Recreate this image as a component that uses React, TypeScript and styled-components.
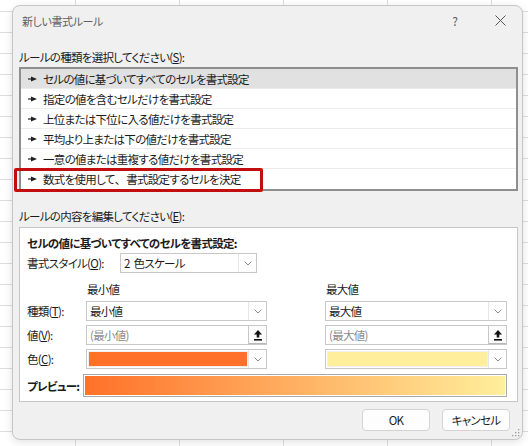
import React from "react";
import styled, { createGlobalStyle } from "styled-components";

const GlobalStyle = createGlobalStyle`
  html, body { margin: 0; padding: 0; }
  body {
    width: 528px;
    height: 446px;
    overflow: hidden;
    background-color: #fff;
    background-image:
      linear-gradient(to right, #dedede 1px, transparent 1px),
      linear-gradient(to bottom, #dedede 1px, transparent 1px);
    background-size: 104px 21px;
    background-position: 75px 11px;
    font-family: "Noto Sans CJK JP", "Noto Sans", sans-serif;
    font-feature-settings: "palt";
    letter-spacing: -0.7px;
    color: #1b1b1b;
  }
`;

const Page = styled.div`
  padding: 5px 0 0 12px;
`;

const Dialog = styled.div`
  position: relative;
  box-sizing: border-box;
  width: 511px;
  height: 435px;
  background: #f0f0f0;
  border: 1px solid #c6c6c6;
  border-radius: 8px;
  box-shadow: 0 2px 8px rgba(0, 0, 0, 0.12);
  padding: 0 4px 0 6px;
  display: flex;
  flex-direction: column;
`;

const TitleBar = styled.div`
  display: flex;
  align-items: center;
  height: 29px;
`;

const Title = styled.div`
  flex: 1;
  padding-left: 3px;
  font-size: 11px;
  letter-spacing: -0.4px;
  color: #606060;
`;

const TitleButton = styled.div<{ $mr?: number }>`
  width: 30px;
  height: 29px;
  display: flex;
  align-items: center;
  justify-content: center;
  margin-right: ${(p) => p.$mr ?? 0}px;
  color: #5c5c5c;
  font-size: 12px;
  letter-spacing: 0;
`;

const SectionLabel = styled.div<{ $mt: number }>`
  margin-top: ${(p) => p.$mt}px;
  font-size: 11.5px;
  line-height: 16px;
`;

const U = styled.span`
  text-decoration: underline;
  text-underline-offset: 1px;
`;

const FullWidth = styled.span`
  font-feature-settings: normal;
  letter-spacing: 0;
`;

const List = styled.div`
  position: relative;
  margin-top: 2px;
  background: #fff;
  border: 2px solid #8e8e8e;
`;

const Row = styled.div<{ $selected?: boolean; $last?: boolean }>`
  box-sizing: border-box;
  height: 20px;
  display: flex;
  align-items: center;
  padding-left: 7px;
  font-size: 11.5px;
  white-space: pre;
  background: ${(p) => (p.$selected ? "#e1e1e1" : "#fff")};
  border-bottom: ${(p) => (p.$last ? "none" : "1px solid #ececec")};
`;

const RowArrow = styled.svg`
  width: 9px;
  height: 6px;
  margin-right: 6px;
  flex: none;
`;

const Highlight = styled.div`
  position: absolute;
  left: -7px;
  top: 99px;
  width: 249px;
  height: 24px;
  box-sizing: border-box;
  border: 3px solid #c20e0e;
  border-radius: 2px;
`;

const Panel = styled.div`
  box-sizing: border-box;
  margin-top: 3px;
  height: 175px;
  background: #fff;
  border: 1px solid #c6c6c6;
  padding: 7px 10px 0 7px;
  display: flex;
  flex-direction: column;
`;

const Heading = styled.div`
  font-size: 11.5px;
  line-height: 16px;
  font-weight: bold;
`;

const StyleRow = styled.div`
  margin-top: 2px;
  display: flex;
  align-items: center;
  height: 20px;
  font-size: 11.5px;
`;

const FieldLabel = styled.div<{ $w: number; $bold?: boolean }>`
  width: ${(p) => p.$w}px;
  flex: none;
  white-space: nowrap;
  font-size: 11.5px;
  font-weight: ${(p) => (p.$bold ? "bold" : "normal")};
`;

const Grid = styled.div`
  margin-top: 8px;
  display: grid;
  grid-template-columns: 59px 181px 58px 182px;
  grid-template-rows: 16px 20px 20px 20px;
  row-gap: 4px;
  align-items: center;
  font-size: 11.5px;
`;

const ColHead = styled.div<{ $col: number }>`
  grid-column: ${(p) => p.$col};
  padding-left: 1px;
  line-height: 16px;
`;

const Box = styled.div<{ $col: number; $w?: number }>`
  grid-column: ${(p) => p.$col};
  box-sizing: border-box;
  height: 20px;
  width: ${(p) => (p.$w ? `${p.$w}px` : "auto")};
  display: flex;
  align-items: stretch;
  background: #fff;
  border: 1px solid #c8c8c8;
`;

const BoxText = styled.div<{ $muted?: boolean }>`
  flex: 1;
  display: flex;
  align-items: center;
  padding-left: 3px;
  font-size: 11.5px;
  white-space: pre;
  word-spacing: 2px;
  color: ${(p) => (p.$muted ? "#8a8a8a" : "#1b1b1b")};
`;

const ChevronCell = styled.div`
  width: 17px;
  flex: none;
  display: flex;
  align-items: center;
  justify-content: center;
  border-left: 1px solid #e6e6e6;
`;

const PickButton = styled.div`
  width: 17px;
  flex: none;
  display: flex;
  align-items: center;
  justify-content: center;
  background: #fbfbfb;
  border-left: 1px solid #c8c8c8;
  box-shadow: inset 0 -1px 0 #b8b8b8;
`;

const Swatch = styled.div<{ $color: string }>`
  flex: 1;
  margin: 2px 1px 2px 2px;
  background: ${(p) => p.$color};
  outline: 1px solid rgba(0, 0, 0, 0.06);
`;

const PreviewRow = styled.div`
  margin-top: 5px;
  display: flex;
  align-items: center;
  height: 23px;
`;

const PreviewBar = styled.div`
  flex: 1;
  box-sizing: border-box;
  height: 23px;
  border: 1px solid #a9a9a9;
  padding: 1px;
  background: #fff;
`;

const Gradient = styled.div`
  height: 100%;
  background: linear-gradient(to right, #ff7128, #ffef9c);
`;

const Buttons = styled.div`
  margin-top: 7px;
  display: flex;
  justify-content: flex-end;
  gap: 12px;
  padding-right: 8px;
`;

const Button = styled.div`
  box-sizing: border-box;
  width: 68px;
  height: 22px;
  display: flex;
  align-items: center;
  justify-content: center;
  background: #fdfdfd;
  border: 1px solid #d4d4d4;
  border-radius: 4px;
  font-size: 11.5px;
`;

const Grip = styled.svg`
  position: absolute;
  right: 2px;
  bottom: 2px;
  width: 9px;
  height: 9px;
`;

const Arrow = () => (
  <RowArrow viewBox="0 0 9 6">
    <line x1="0" y1="3" x2="4" y2="3" stroke="#222" strokeWidth="1.2" />
    <polygon points="3,0.6 9,3 3,5.4" fill="#222" />
  </RowArrow>
);

const Chevron = () => (
  <svg width="8" height="5" viewBox="0 0 8 5">
    <polyline points="0.5,0.5 4,4 7.5,0.5" fill="none" stroke="#8a8a8a" strokeWidth="1" />
  </svg>
);

const UpIcon = () => (
  <svg width="8" height="11" viewBox="0 0 8 11">
    <polygon points="4,0 8,4.5 5.3,4.5 5.3,7.5 2.7,7.5 2.7,4.5 0,4.5" fill="#111" />
    <rect x="0" y="9" width="8" height="1.6" fill="#111" />
  </svg>
);

const rules = [
  "セルの値に基づいてすべてのセルを書式設定",
  "指定の値を含むセルだけを書式設定",
  "上位または下位に入る値だけを書式設定",
  "平均より上または下の値だけを書式設定",
  "一意の値または重複する値だけを書式設定",
  "数式を使用して、書式設定するセルを決定",
];

// keep the ideographic comma at full width, as in the original dialog
const renderRule = (text: string) =>
  text.split("、").flatMap((part, i) =>
    i === 0 ? [part] : [<FullWidth key={i}>、</FullWidth>, part]
  );

export default function App() {
  return (
    <>
      <GlobalStyle />
      <Page>
        <Dialog>
          <TitleBar>
            <Title>新しい書式ルール</Title>
            <TitleButton $mr={15}>?</TitleButton>
            <TitleButton $mr={3}>
              <svg width="11" height="11" viewBox="0 0 11 11">
                <path d="M0.5 0.5 L10.5 10.5 M10.5 0.5 L0.5 10.5" stroke="#555" strokeWidth="1" />
              </svg>
            </TitleButton>
          </TitleBar>

          <SectionLabel $mt={14}>
            ルールの種類を選択してください(<U>S</U>):
          </SectionLabel>
          <List>
            {rules.map((r, i) => (
              <Row key={r} $selected={i === 0} $last={i === rules.length - 1}>
                <Arrow />
                {renderRule(r)}
              </Row>
            ))}
            <Highlight />
          </List>

          <SectionLabel $mt={17}>
            ルールの内容を編集してください(<U>E</U>):
          </SectionLabel>
          <Panel>
            <Heading>セルの値に基づいてすべてのセルを書式設定:</Heading>
            <StyleRow>
              <FieldLabel $w={93}>
                書式スタイル(<U>O</U>):
              </FieldLabel>
              <Box $col={1} $w={137}>
                <BoxText>2 色スケール</BoxText>
                <ChevronCell>
                  <Chevron />
                </ChevronCell>
              </Box>
            </StyleRow>

            <Grid>
              <ColHead $col={2}>最小値</ColHead>
              <ColHead $col={4}>最大値</ColHead>

              <FieldLabel $w={59}>
                種類(<U>T</U>):
              </FieldLabel>
              <Box $col={2}>
                <BoxText>最小値</BoxText>
                <ChevronCell>
                  <Chevron />
                </ChevronCell>
              </Box>
              <Box $col={4}>
                <BoxText>最大値</BoxText>
                <ChevronCell>
                  <Chevron />
                </ChevronCell>
              </Box>

              <FieldLabel $w={59}>
                値(<U>V</U>):
              </FieldLabel>
              <Box $col={2}>
                <BoxText $muted>(最小値)</BoxText>
                <PickButton>
                  <UpIcon />
                </PickButton>
              </Box>
              <Box $col={4}>
                <BoxText $muted>(最大値)</BoxText>
                <PickButton>
                  <UpIcon />
                </PickButton>
              </Box>

              <FieldLabel $w={59}>
                色(<U>C</U>):
              </FieldLabel>
              <Box $col={2}>
                <Swatch $color="#ff7128" />
                <ChevronCell>
                  <Chevron />
                </ChevronCell>
              </Box>
              <Box $col={4}>
                <Swatch $color="#ffef9c" />
                <ChevronCell>
                  <Chevron />
                </ChevronCell>
              </Box>
            </Grid>

            <PreviewRow>
              <FieldLabel $w={56} $bold>
                プレビュー:
              </FieldLabel>
              <PreviewBar>
                <Gradient />
              </PreviewBar>
            </PreviewRow>
          </Panel>

          <Buttons>
            <Button>OK</Button>
            <Button>キャンセル</Button>
          </Buttons>

          <Grip viewBox="0 0 9 9">
            {[
              [7, 1],
              [7, 4],
              [4, 4],
              [7, 7],
              [4, 7],
              [1, 7],
            ].map(([x, y]) => (
              <rect key={`${x}-${y}`} x={x} y={y} width="1.3" height="1.3" fill="#a0a0a0" />
            ))}
          </Grip>
        </Dialog>
      </Page>
    </>
  );
}
